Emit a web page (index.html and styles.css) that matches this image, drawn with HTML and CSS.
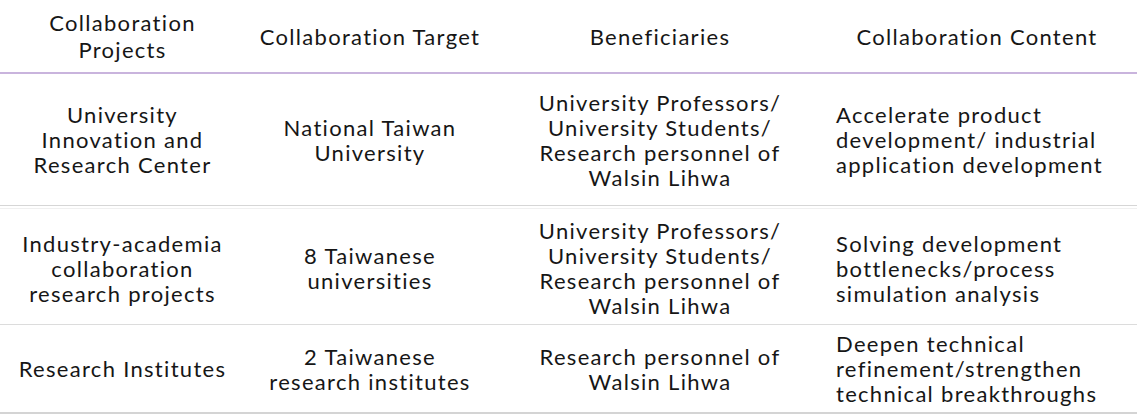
FILE: index.html
```html
<!DOCTYPE html>
<html lang="en">
<head>
<meta charset="utf-8">
<title>Collaboration Projects</title>
<link rel="stylesheet" href="styles.css">
</head>
<body>
<div class="table">
  <div class="row head">
    <div class="cell c1">Collaboration<br>Projects</div>
    <div class="cell c2">Collaboration Target</div>
    <div class="cell c3">Beneficiaries</div>
    <div class="cell c4h">Collaboration Content</div>
  </div>
  <div class="row r1">
    <div class="cell c1">University<br>Innovation and<br>Research Center</div>
    <div class="cell c2">National Taiwan<br>University</div>
    <div class="cell c3">University Professors/<br>University Students/<br>Research personnel of<br>Walsin Lihwa</div>
    <div class="cell c4">Accelerate product<br>development/ industrial<br>application development</div>
  </div>
  <div class="row r2">
    <div class="cell c1">Industry-academia<br>collaboration<br>research projects</div>
    <div class="cell c2">8 Taiwanese<br>universities</div>
    <div class="cell c3">University Professors/<br>University Students/<br>Research personnel of<br>Walsin Lihwa</div>
    <div class="cell c4">Solving development<br>bottlenecks/process<br>simulation analysis</div>
  </div>
  <div class="row r3">
    <div class="cell c1">Research Institutes</div>
    <div class="cell c2">2 Taiwanese<br>research institutes</div>
    <div class="cell c3">Research personnel of<br>Walsin Lihwa</div>
    <div class="cell c4">Deepen technical<br>refinement/strengthen<br>technical breakthroughs</div>
  </div>
</div>
</body>
</html>
```
FILE: styles.css
```css
html, body {
  margin: 0;
  padding: 0;
  background: #ffffff;
}

body {
  font-family: Lato, "Open Sans", sans-serif;
  font-size: 22px;
  line-height: 25px;
  letter-spacing: 1.3px;
  color: #161616;
}

.table {
  width: 1137px;
}

.row {
  display: grid;
  grid-template-columns: 245px 250px 330px 1fr;
  box-sizing: border-box;
}

.head {
  height: 74px;
  line-height: 27px;
  border-bottom: 2px solid #c9b4dd;
}

.r1 {
  height: 132px;
  border-bottom: 1px solid #d6d6d6;
}

.r2 {
  height: 119px;
  padding-top: 6px;
  border-bottom: 1px solid #dcdcdc;
  background: linear-gradient(#ffffff 0 2px, #f0f0f0 2px 3px, #ffffff 3px);
}

.r3 {
  height: 89px;
  border-bottom: 2px solid #d4d4d4;
}

.cell {
  display: flex;
  flex-direction: column;
  justify-content: center;
  text-align: center;
}

.c4 {
  text-align: left;
  padding-left: 11px;
}

.c4h {
  text-align: center;
  padding-right: 8px;
}
```
